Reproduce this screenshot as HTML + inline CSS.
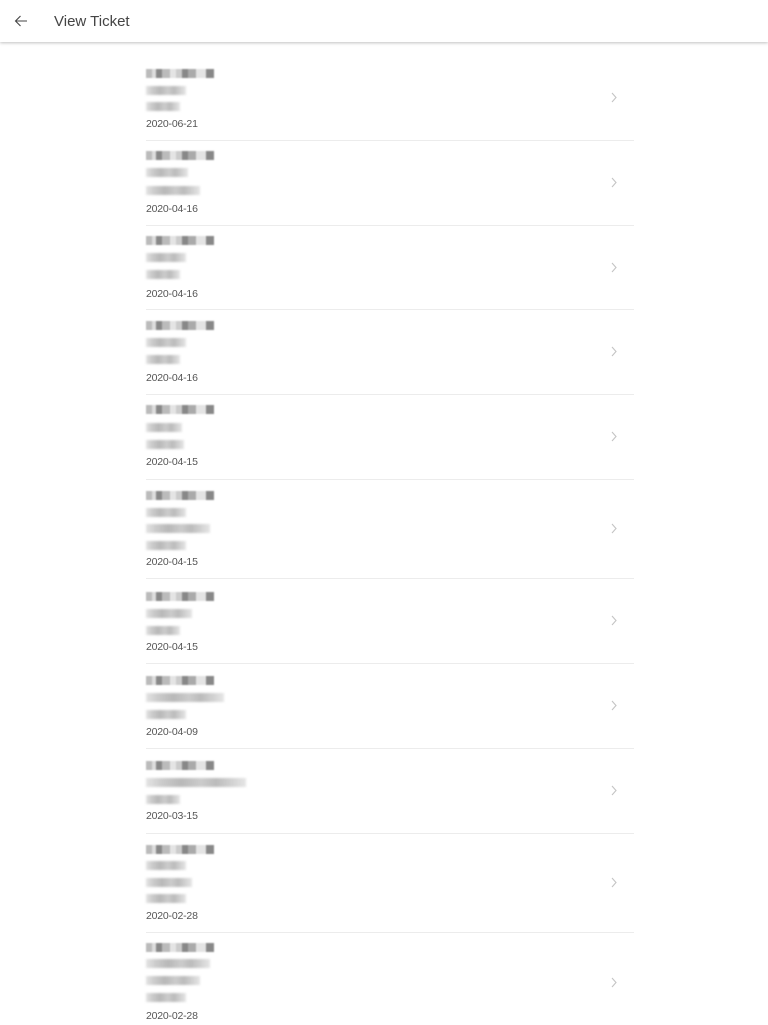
<!DOCTYPE html>
<html><head><meta charset="utf-8"><style>
*{margin:0;padding:0;box-sizing:border-box}
body{width:768px;height:1025px;overflow:hidden;background:#fff;font-family:"Liberation Sans",Arial,sans-serif;position:relative}
.hdr{position:absolute;left:0;top:0;width:768px;height:42px;background:#fff;box-shadow:0 1px 3px rgba(0,0,0,.25)}
.hdr .t{position:absolute;left:54px;top:13px;font-size:15px;color:#444}
.hdr svg{position:absolute;left:13px;top:13px}
.t1{position:absolute;left:146px;width:68px;height:9px;filter:blur(.8px);
background:linear-gradient(90deg,#bbb 0 6px,#ddd 6px 10px,#888 10px 16px,#bbb 16px 24px,#e4e4e4 24px 30px,#ccc 30px 36px,#888 36px 42px,#aaa 42px 50px,#e4e4e4 50px 60px,#888 60px 68px)}
.ln{position:absolute;left:146px;height:9px;filter:blur(1px);
background:linear-gradient(90deg,#e4e4e4 0,#ccc 15%,#b8b8b8 35%,#ccc 55%,#bbb 70%,#e6e6e6 100%)}
.d{position:absolute;left:146px;font-size:10.5px;color:#555;line-height:12px;letter-spacing:-.2px}
.hr{position:absolute;left:146px;width:488px;height:1px;background:#ececec}
.ch{position:absolute;left:610px;width:8px;height:11px}
</style></head><body>
<div class="hdr"><svg width="16" height="16" viewBox="0 0 16 16"><path d="M14 8H2.5M7.5 3L2.5 8l5 5" stroke="#444" stroke-width="1.1" fill="none"/></svg><div class="t">View Ticket</div></div>

<div class="t1" style="top:69px"></div><div class="ln" style="top:86px;width:40px"></div><div class="ln" style="top:102px;width:34px"></div><div class="d" style="top:118px">2020-06-21</div>
<svg class="ch" style="top:92px" viewBox="0 0 8 11"><path d="M2 1l4 4.5L2 10" stroke="#c4c4c4" stroke-width="1.1" fill="none"/></svg>
<div class="hr" style="top:140px"></div>

<div class="t1" style="top:151px"></div><div class="ln" style="top:168px;width:42px"></div><div class="ln" style="top:186px;width:54px"></div><div class="d" style="top:203px">2020-04-16</div>
<svg class="ch" style="top:177px" viewBox="0 0 8 11"><path d="M2 1l4 4.5L2 10" stroke="#c4c4c4" stroke-width="1.1" fill="none"/></svg>
<div class="hr" style="top:225px"></div>

<div class="t1" style="top:236px"></div><div class="ln" style="top:253px;width:40px"></div><div class="ln" style="top:270px;width:34px"></div><div class="d" style="top:288px">2020-04-16</div>
<svg class="ch" style="top:262px" viewBox="0 0 8 11"><path d="M2 1l4 4.5L2 10" stroke="#c4c4c4" stroke-width="1.1" fill="none"/></svg>
<div class="hr" style="top:309px"></div>

<div class="t1" style="top:321px"></div><div class="ln" style="top:338px;width:40px"></div><div class="ln" style="top:355px;width:34px"></div><div class="d" style="top:372px">2020-04-16</div>
<svg class="ch" style="top:346px" viewBox="0 0 8 11"><path d="M2 1l4 4.5L2 10" stroke="#c4c4c4" stroke-width="1.1" fill="none"/></svg>
<div class="hr" style="top:394px"></div>

<div class="t1" style="top:405px"></div><div class="ln" style="top:423px;width:36px"></div><div class="ln" style="top:440px;width:38px"></div><div class="d" style="top:456px">2020-04-15</div>
<svg class="ch" style="top:431px" viewBox="0 0 8 11"><path d="M2 1l4 4.5L2 10" stroke="#c4c4c4" stroke-width="1.1" fill="none"/></svg>
<div class="hr" style="top:479px"></div>

<div class="t1" style="top:491px"></div><div class="ln" style="top:508px;width:40px"></div><div class="ln" style="top:524px;width:64px"></div><div class="ln" style="top:541px;width:40px"></div><div class="d" style="top:556px">2020-04-15</div>
<svg class="ch" style="top:523px" viewBox="0 0 8 11"><path d="M2 1l4 4.5L2 10" stroke="#c4c4c4" stroke-width="1.1" fill="none"/></svg>
<div class="hr" style="top:578px"></div>

<div class="t1" style="top:592px"></div><div class="ln" style="top:609px;width:46px"></div><div class="ln" style="top:626px;width:34px"></div><div class="d" style="top:641px">2020-04-15</div>
<svg class="ch" style="top:615px" viewBox="0 0 8 11"><path d="M2 1l4 4.5L2 10" stroke="#c4c4c4" stroke-width="1.1" fill="none"/></svg>
<div class="hr" style="top:663px"></div>

<div class="t1" style="top:676px"></div><div class="ln" style="top:693px;width:78px"></div><div class="ln" style="top:710px;width:40px"></div><div class="d" style="top:726px">2020-04-09</div>
<svg class="ch" style="top:700px" viewBox="0 0 8 11"><path d="M2 1l4 4.5L2 10" stroke="#c4c4c4" stroke-width="1.1" fill="none"/></svg>
<div class="hr" style="top:748px"></div>

<div class="t1" style="top:761px"></div><div class="ln" style="top:778px;width:100px"></div><div class="ln" style="top:795px;width:34px"></div><div class="d" style="top:810px">2020-03-15</div>
<svg class="ch" style="top:785px" viewBox="0 0 8 11"><path d="M2 1l4 4.5L2 10" stroke="#c4c4c4" stroke-width="1.1" fill="none"/></svg>
<div class="hr" style="top:833px"></div>

<div class="t1" style="top:845px"></div><div class="ln" style="top:861px;width:40px"></div><div class="ln" style="top:878px;width:46px"></div><div class="ln" style="top:894px;width:40px"></div><div class="d" style="top:910px">2020-02-28</div>
<svg class="ch" style="top:877px" viewBox="0 0 8 11"><path d="M2 1l4 4.5L2 10" stroke="#c4c4c4" stroke-width="1.1" fill="none"/></svg>
<div class="hr" style="top:932px"></div>

<div class="t1" style="top:943px"></div><div class="ln" style="top:959px;width:64px"></div><div class="ln" style="top:976px;width:54px"></div><div class="ln" style="top:993px;width:40px"></div><div class="d" style="top:1010px">2020-02-28</div>
<svg class="ch" style="top:977px" viewBox="0 0 8 11"><path d="M2 1l4 4.5L2 10" stroke="#c4c4c4" stroke-width="1.1" fill="none"/></svg>
</body></html>
